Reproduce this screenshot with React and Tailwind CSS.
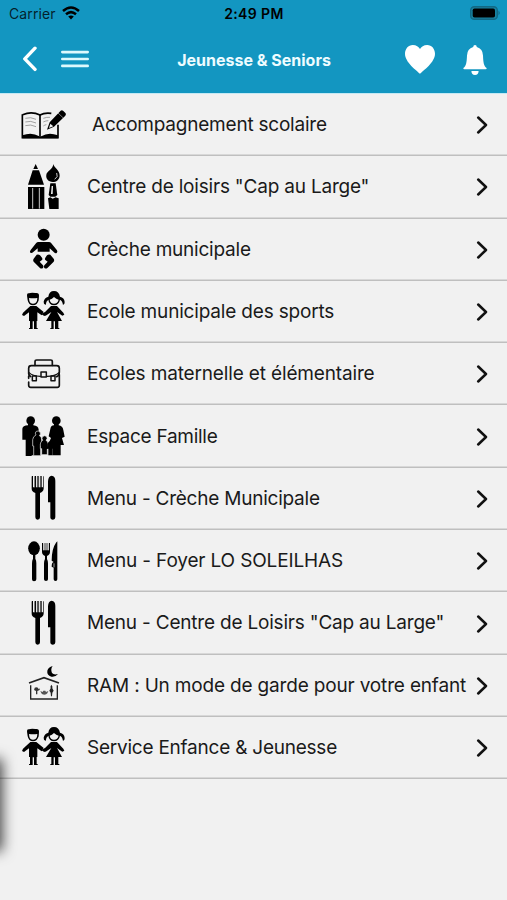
import { useState } from 'react';

const BookIcon = () => (
  <svg viewBox="0 -1 261 187" className="w-[87px] h-[62.3px] -mt-px shrink-0" fill="none" stroke="#000">
    <path d="M68 61Q95 50 120 62Q134 54 154 57M174 91V130H67V60" strokeWidth="5" />
    <path d="M120 62V126" strokeWidth="5" />
    <path d="M67 123Q95 112 118 126L124 126Q145 112 174 123V132H67Z" fill="#000" stroke="none" />
    <path d="M76 72Q92 67 108 75M76 83Q92 78 108 86M76 94Q92 89 108 97M130 72Q140 68 150 69M130 83Q138 79 145 79M130 95Q134 92 139 91" stroke="#777" strokeWidth="2" />
    <path d="M141 106L149 84L182 49Q186 46 190 50L197 57Q199 61 196 64L162 97Z" fill="#000" stroke="none" />
    <path d="M151 88L160 96L147 101Z" fill="#f1f1f1" stroke="none" />
    <path d="M174 56L190 71" stroke="#f1f1f1" strokeWidth="1.5" />
  </svg>
);

const PencilsIcon = () => (
  <svg viewBox="0 186 261 187" className="w-[87px] h-[62.3px] -mt-px shrink-0">
    <path d="M107 210L114 225H100ZM98 229H117L132 272H84Z" />
    <path d="M84 279H133V345H84Z" />
    <path d="M98 282V344M118 282V344" stroke="#f1f1f1" strokeWidth="2.5" />
    <path d="M160 210C161 221 180 228 179 245C178 257 169 264 158 264C145 263 137 254 139 242C141 231 159 226 160 210Z" />
    <path d="M170 237Q176 249 164 256" stroke="#f1f1f1" strokeWidth="2.5" fill="none" />
    <path d="M151 268H167L172 303L166 308H151L146 303Z" />
    <path d="M155 276L153 300H158L159 276Z" fill="#f1f1f1" />
    <path d="M144 313L151 310L158 314L167 310L176 313V345H148Z" />
  </svg>
);

const BabyIcon = () => (
  <svg viewBox="0 -3 261 187" className="w-[87px] h-[62.3px] -mt-px shrink-0">
    <circle cx="131" cy="47" r="18" />
    <path d="M115 69H147Q151 69 154 73L171 94Q174 99 170 102Q166 104 162 100L149 88V98H113V88L99 100Q95 104 91 101Q88 98 92 93L108 73Q111 69 115 69Z" />
    <path d="M110 107Q116 105 120 109L126 116Q129 121 125 124L119 128L129 139Q132 144 128 148Q123 150 119 146L101 128Q98 124 101 119Z" />
    <path d="M151 107Q145 105 141 109L136 116Q133 121 137 124L143 128L133 139Q130 144 134 148Q139 150 143 146L161 128Q164 124 161 119Z" />
  </svg>
);

const KidsIcon = () => (
  <svg viewBox="0 184 261 187" className="w-[87px] h-[62.3px] -mt-px shrink-0">
    <path d="M81 231Q80 223 87 224Q93 221 106 223Q118 221 117 232L116 245Q112 260 99 260Q86 260 83 245Z" />
    <path d="M87 238Q99 240 112 238L111 246Q108 255 99 255Q90 255 88 246Z" fill="#f1f1f1" />
    <path d="M91 262H109L131 280L125 290L112 281V307H110V328H113V331H102V308H98V331H87V328H90V307H87V281L72 292L66 289L69 282Z" />
    <path d="M145 234Q147 217 162 217Q177 217 180 234Q193 237 194 250Q195 256 189 259Q187 246 180 243Q177 259 162 260Q147 259 145 243Q138 247 137 259Q130 256 131 249Q133 237 145 234Z" />
    <path d="M149 243Q156 241 162 235Q169 241 176 243Q173 255 162 255Q151 255 149 243Z" fill="#f1f1f1" />
    <path d="M153 262H171L190 282L193 288L187 291L171 280L186 307H175V328H178V331H165V308H161V331H151V328H154V307H138L154 280L137 291L127 288Z" />
    <path d="M124 286L133 292L139 287L134 281Z" />
  </svg>
);

const SatchelIcon = () => (
  <svg viewBox="0 -1 261 187" className="w-[87px] h-[62.3px] -mt-px shrink-0" fill="none" stroke="#111" strokeWidth="5" strokeLinejoin="round" strokeLinecap="round">
    <path d="M105 66V55Q105 50 110 50H152Q157 50 157 55V66" />
    <path d="M92 100Q85 96 86 86V75Q86 67 94 67H170Q178 67 178 75V86Q178 97 170 100" />
    <path d="M87 88Q97 98 121 99M141 99Q166 98 177 88" strokeWidth="4" />
    <path d="M123 86H139V101H123ZM97 98H109V112H97ZM153 98H165V112H153Z" strokeWidth="4.5" />
    <path d="M178 94V126Q178 132 172 132H92Q86 132 86 126V116M86 105V98" />
  </svg>
);

const FamilyIcon = () => (
  <svg viewBox="0 186 261 187" className="w-[87px] h-[62.3px] -mt-px shrink-0">
    <circle cx="92" cy="233" r="13" />
    <path d="M84 240H100V247Q115 248 116 260V337H95V339H77V290H67V257Q68 248 84 247Z" />
    <circle cx="169" cy="233" r="13" />
    <path d="M162 240H176V247Q188 249 190 261L194 281L186 285L192 306H182V337H158V306H144L153 285L146 280L151 258Q152 248 162 247Z" />
    <g stroke="#f1f1f1" strokeWidth="2">
      <path d="M108 276Q103 270 109 265Q115 262 120 267Q124 274 118 278Q126 281 125 292V309H122V338H101V309H98V290Q99 280 108 276Z" />
      <path d="M128 292Q123 285 129 280Q134 276 140 281Q144 287 138 292Q145 296 145 304V318H142V335H125V317H121V303Q122 295 128 292Z" />
    </g>
    <path d="M143 306Q143 296 151 295Q158 295 159 304L162 317H158V337H145V317H140Z" />
  </svg>
);

const ForkKnifeIcon = () => (
  <svg viewBox="0 1 261 187" className="w-[87px] h-[62.3px] -mt-px shrink-0">
    <path d="M96 28H99V62H104V28H108V62H112V28H116V62H121V28H125V62Q129 62 129 60V28Q131 28 131 32V66Q130 75 120 79V152Q120 159 113 159Q106 159 106 152V79Q95 75 95 66V30Z" />
    <path d="M104 30V62M112 30V62M121 30V62" stroke="#666" strokeWidth="2" />
    <path d="M144 107V44Q145 28 155 27Q166 28 166 42V152Q166 159 159 159Q151 159 151 152V107Z" />
  </svg>
);

const CutleryIcon = () => (
  <svg viewBox="0 188 261 187" className="w-[87px] h-[62.3px] -mt-px shrink-0">
    <ellipse cx="102" cy="243" rx="17.5" ry="21" />
    <path d="M99 262H106V274Q109 279 109 288V336Q109 342 102 342Q96 342 96 336V288Q96 279 99 274Z" />
    <path d="M126 227H129V249H134V227H136V249H140V227H142V249H147V227H150V253Q150 262 141 266V275Q144 280 144 288V336Q144 341 138 341Q132 341 132 336V288Q132 280 135 275V266Q126 262 126 253Z" />
    <path d="M132 228V248M138 228V248M144 228V248" stroke="#777" strokeWidth="2" />
    <path d="M172 222V336Q172 341 167 341Q161 341 161 336V301L155 298Q155 285 161 284L155 280Q155 244 168 226Z" />
    <path d="M162 288V300" stroke="#f1f1f1" strokeWidth="2" />
  </svg>
);

const HouseIcon = () => (
  <svg viewBox="0 190 261 187" className="w-[87px] h-[62.3px] -mt-px shrink-0">
    <path d="M158 226Q151 235 156 247Q162 254 174 250Q166 260 154 258Q140 254 142 240Q145 229 158 226Z" />
    <path d="M87 277L132 261L177 277" fill="none" stroke="#222" strokeWidth="5" />
    <path d="M92 284V325H172V284" fill="none" stroke="#222" strokeWidth="4" />
    <path d="M103 296Q102 290 109 290Q115 290 116 296L119 293V298L112 301V311H108V301L102 298Z" fill="#333" />
    <path d="M121 301L128 304L130 300H136L138 304L145 301L142 308Q139 312 133 312Q126 312 124 308Z" fill="#555" />
    <path d="M154 282Q159 287 157 293L161 300L157 306L156 317H153L152 306L148 300L152 293Q150 287 154 282Z" fill="#222" />
  </svg>
);

const items = [
  { label: 'Accompagnement scolaire', icon: BookIcon, text: 'pl-[5px] tracking-[-0.22px]' },
  { label: 'Centre de loisirs "Cap au Large"', icon: PencilsIcon, text: 'tracking-[-0.2px]' },
  { label: 'Crèche municipale', icon: BabyIcon, text: 'tracking-[-0.23px]' },
  { label: 'Ecole municipale des sports', icon: KidsIcon, text: 'tracking-[-0.18px]' },
  { label: 'Ecoles maternelle et élémentaire', icon: SatchelIcon, text: 'tracking-[-0.15px]' },
  { label: 'Espace Famille', icon: FamilyIcon, text: 'tracking-[-0.26px]' },
  { label: 'Menu - Crèche Municipale', icon: ForkKnifeIcon, text: 'tracking-[-0.23px]' },
  { label: 'Menu - Foyer LO SOLEILHAS', icon: CutleryIcon, text: 'tracking-[-0.15px]' },
  { label: 'Menu - Centre de Loisirs "Cap au Large"', icon: ForkKnifeIcon, text: 'tracking-[-0.2px]' },
  { label: 'RAM : Un mode de garde pour votre enfant', icon: HouseIcon, text: 'tracking-[-0.17px]' },
  { label: 'Service Enfance & Jeunesse', icon: KidsIcon, text: 'tracking-[-0.23px]' },
];

function StatusBar() {
  return (
    <div className="grid grid-cols-3 items-center h-7 pl-[9px] pr-[6px] text-black">
      <div className="flex items-center gap-[6px]">
        <span className="text-[14px] leading-none tracking-[0.1px] text-black/80">Carrier</span>
        <svg viewBox="0 0 18 14" className="w-[18px] h-[14px] -mt-[2px]" fill="none" stroke="#000" strokeWidth="2.5">
          <path d="M1 5Q9 -2 17 5" />
          <path d="M4 8.3Q9 4 14 8.3" />
          <path d="M6.2 10.6Q9 8.3 11.8 10.6L9 13.5Z" fill="#000" stroke="none" />
        </svg>
      </div>
      <span className="text-center text-[14px] leading-none font-semibold tracking-[0.4px] pr-[2px]">2:49 PM</span>
      <svg viewBox="0 0 31 14" className="w-[31px] h-[14px] -mt-[2px] justify-self-end">
        <rect x="0.7" y="0.7" width="26.6" height="12.6" rx="3.6" fill="#1883a1" stroke="#126985" strokeWidth="1.4" />
        <rect x="2.7" y="2.5" width="22.3" height="9" rx="1.8" />
        <path d="M28.5 4.8Q31 7 28.5 9.2Z" fill="#126985" />
      </svg>
    </div>
  );
}

export default function App() {
  const [selected, setSelected] = useState(null);

  return (
    <div className="relative w-[507px] h-[900px] overflow-hidden bg-[#f1f1f1] font-['Inter',sans-serif]">
      {/* Header */}
      <header className="h-[94px] bg-[#1396c1] border-b border-[#c5e9f4]">
        <StatusBar />
        <div className="flex items-center h-[64px] pl-[22px] pr-[20px] text-white">
          <button className="mr-[23px] -mt-[3px]">
            <svg viewBox="0 0 16 26" className="w-4 h-[26px]" fill="none" stroke="currentColor" strokeWidth="3.4" strokeLinecap="round" strokeLinejoin="round">
              <path d="M13 2.2L2.8 12.9L13 23.4" />
            </svg>
          </button>
          <button className="-mt-[3px]">
            <svg viewBox="0 0 28 18" className="w-7 h-[18px]" stroke="#ddf9fd" strokeWidth="2.6" strokeLinecap="round">
              <path d="M1.3 2.1H26.7M1.3 9H26.7M1.3 15.9H26.7" />
            </svg>
          </button>
          <h1 className="flex-1 text-center text-[16px] font-bold text-[#eefcff] pl-[14px]">Jeunesse &amp; Seniors</h1>
          <button className="mr-[28px] -mt-[2px]">
            <svg viewBox="0 0 30 29" className="w-[30px] h-[29px]" fill="currentColor">
              <path d="M15 28.8C12 25.8 0 17.5 0 8.8C0 4 3.2 0 7.8 0C11.2 0 13.8 1.8 15 4C16.2 1.8 18.8 0 22.2 0C26.8 0 30 4 30 8.8C30 17.5 18 25.8 15 28.8Z" />
            </svg>
          </button>
          <button>
            <svg viewBox="0 0 24 30" className="w-6 h-[30px]" fill="currentColor">
              <path d="M12 0Q13.7 0 13.8 2Q19.8 3.7 20 10.5C20.3 17.5 20.8 21 23.6 23Q24 24.2 22.5 24.3H1.5Q0 24.2 0.4 23C3.2 21 3.7 17.5 4 10.5Q4.2 3.7 10.2 2Q10.3 0 12 0Z" />
              <path d="M8.4 26H15.6Q15.5 30 12 30Q8.5 30 8.4 26Z" />
            </svg>
          </button>
        </div>
      </header>

      {/* Menu list */}
      <ul>
        {items.map((item, idx) => {
          const Icon = item.icon;
          return (
            <li key={idx} onClick={() => setSelected(idx)} aria-current={selected === idx} className="flex items-center h-[62.3px] shadow-[inset_0_-1.6px_0_#bfbfbf] pr-[19px]">
              <Icon />
              <span className={`flex-1 whitespace-nowrap text-[19px] leading-none text-[#1a1a1a] pb-[1.2px] ${item.text}`}>
                {item.label}
              </span>
              <svg viewBox="0 0 12 18" className="w-3 h-[18px] shrink-0" fill="none" stroke="#111" strokeWidth="2.5" strokeLinecap="round" strokeLinejoin="round">
                <path d="M2.2 1.5L10 9L2.2 16.5" />
              </svg>
            </li>
          );
        })}
      </ul>

      {/* Shadow of the closed side panel */}
      <div className="absolute -left-10 top-[761px] w-10 h-[88px] shadow-[0_0_14px_2px_rgba(0,0,0,0.75)]" />
    </div>
  );
}
